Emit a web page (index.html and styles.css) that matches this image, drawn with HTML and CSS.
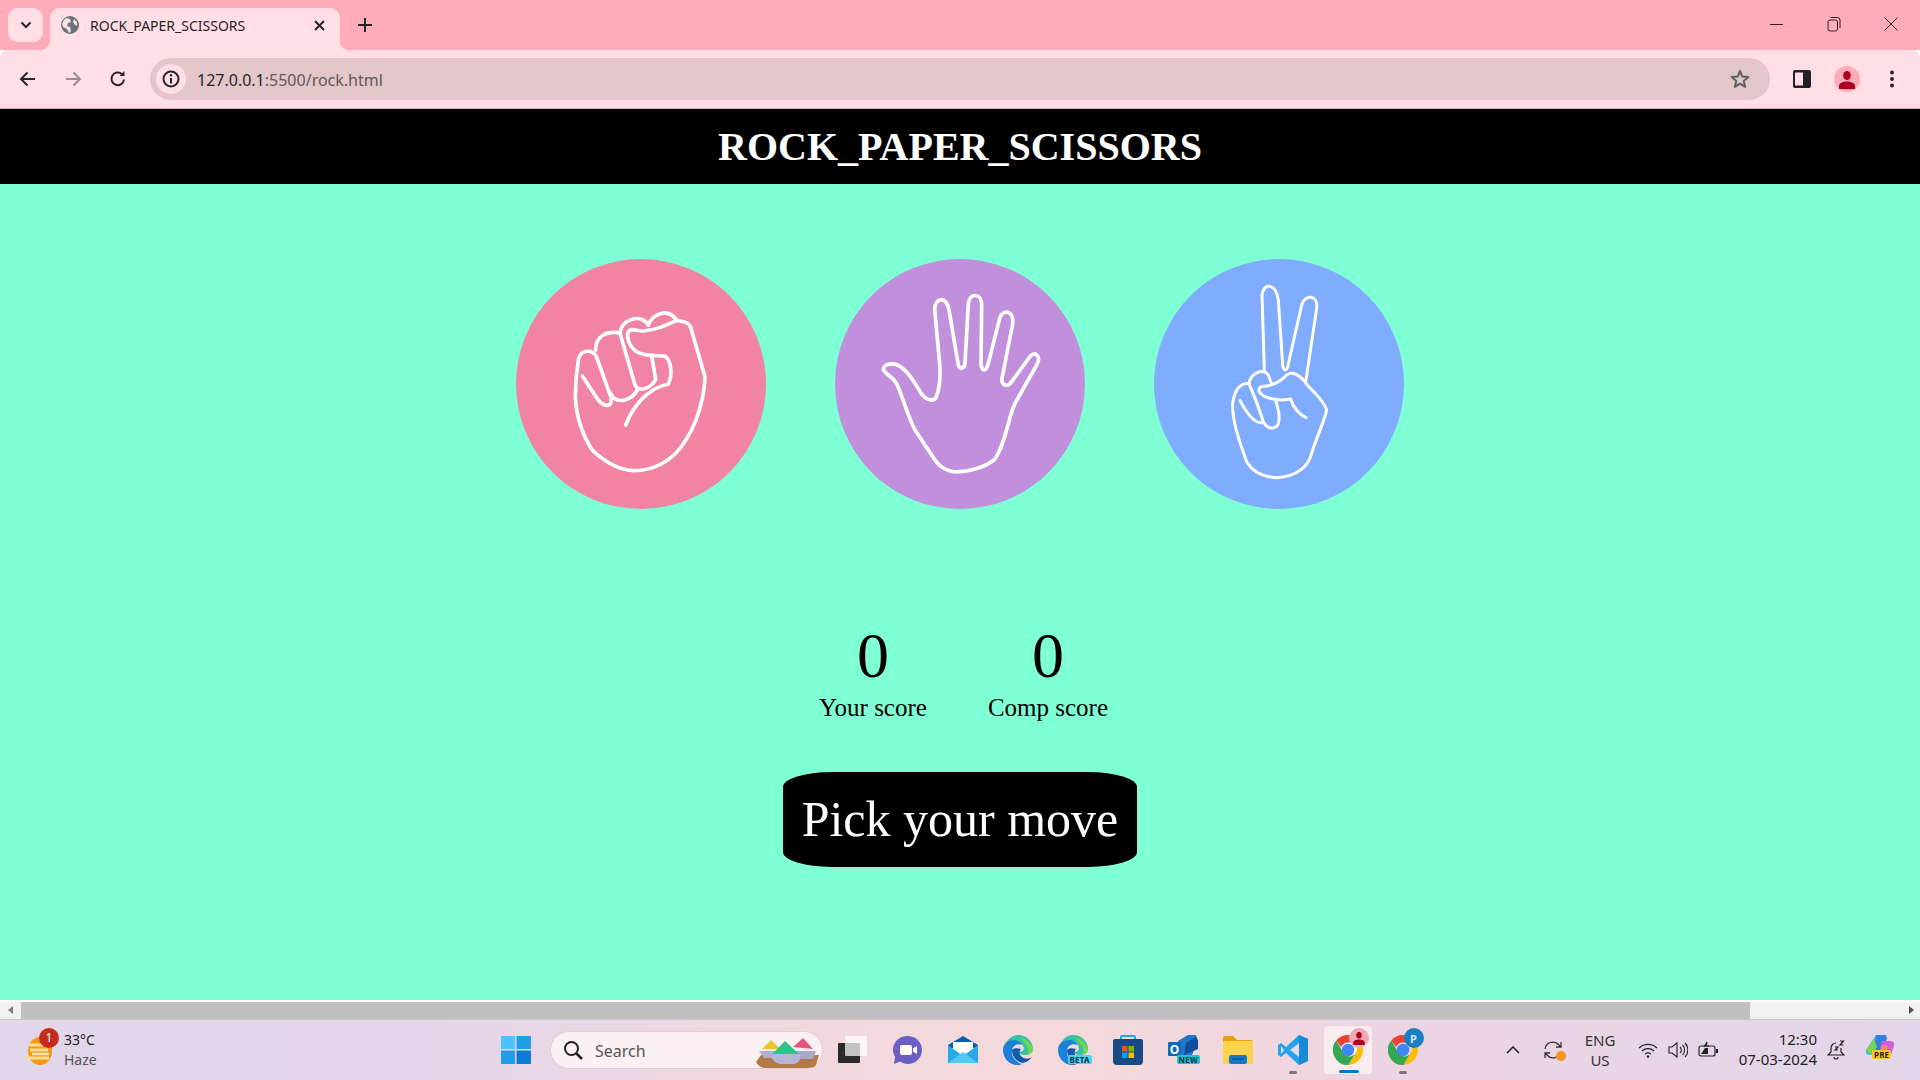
FILE: index.html
```html
<!DOCTYPE html>
<html lang="en">
<head>
    <meta charset="UTF-8">
    <title>ROCK_PAPER_SCISSORS</title>
    <link rel="stylesheet" href="styles.css">
</head>
<body>

<svg class="defs" width="0" height="0">
    <defs>
        <symbol id="chrome" viewBox="0 0 30 30">
            <path d="M15 0a15 15 0 0 1 13 7.5H15a7.500 7.500 0 0 0-6.900 4.500L3.300 5.500A15 15 0 0 1 15 0z" fill="#ea4335"/>
            <path d="M28 7.500A15 15 0 0 1 15.500 30l6-10.500A7.500 7.500 0 0 0 21 7.500z" fill="#fbbc04"/>
            <path d="M15.500 30A15 15 0 0 1 3.300 5.500l6 10.500a7.500 7.500 0 0 0 12.200 3.500z" fill="#34a853"/>
            <circle cx="15" cy="15" r="6.200" fill="#4285f4"/>
        </symbol>
        <symbol id="edge" viewBox="0 0 30 30">
            <path d="M2 11C4 4 9 0 15 0c8 0 15 6 15 14 0 4-4 6-8 6-4 0-6-2-6-3 3 0 5-2 5-4-1-4-5-6-9-6-5 0-8 2-10 4z" fill="#35c1a8"/>
            <path d="M0 15C0 8 6 5 11 5c4 0 7 2 8 5-4-2-9 0-10 5-1 6 3 12 10 14-2 1-3 1-5 1C6 30 0 23 0 15z" fill="#1a80d8"/>
            <path d="M9 15c0 6 4 12 11 13 4-1 7-3 9-6-3 2-7 2-10 0-3-2-3-6-1-8-4-1-7-1-9 1z" fill="#0f5ba8"/>
            <path d="M17 3c6 0 11 5 13 11 0 3-3 5-7 6 3-3 3-7 0-10-2-3-4-5-6-7z" fill="#6fd84e"/>
        </symbol>
    </defs>
</svg>

<!-- browser chrome -->
<div class="tab-strip">
    <div class="tab-search">
        <svg width="12" height="8" viewBox="0 0 12 8"><path d="M1.500 1.500L6 6l4.500-4.500" class="line-dark"/></svg>
    </div>
    <div class="tab">
        <svg class="favicon" width="18" height="18" viewBox="0 0 18 18">
            <circle cx="9" cy="9" r="9" fill="#6b7378"/>
            <path d="M5 2l4 1 1 3-3 1-1 3 3 1 1 4-2 2-2-4-4-2-1-3 2-4zM13 3l3 3v4l-2-1-2-3z" fill="#ffdfe5"/>
        </svg>
        <span class="tab-title">ROCK_PAPER_SCISSORS</span>
        <svg class="tab-close" width="11" height="11" viewBox="0 0 11 11"><path d="M1 1l9 9M10 1l-9 9" class="line-dark"/></svg>
    </div>
    <svg class="new-tab" width="14" height="14" viewBox="0 0 14 14"><path d="M7 0v14M0 7h14" class="line-dark"/></svg>
    <div class="window-btns">
        <svg width="14" height="14" viewBox="0 0 14 14"><path d="M0 7.500h13" class="line-thin"/></svg>
        <svg width="14" height="16" viewBox="0 0 14 16"><rect x="1" y="4" width="9.500" height="11" rx="2" class="line-thin"/><path d="M3.500 1.500h7a2.500 2.500 0 0 1 2.500 2.500v8" class="line-thin"/></svg>
        <svg width="14" height="14" viewBox="0 0 14 14"><path d="M.5.500l13 13M13.500.500l-13 13" class="line-thin"/></svg>
    </div>
</div>

<div class="toolbar">
    <div class="nav-btns">
        <svg width="18" height="16" viewBox="0 0 18 16"><path d="M16 8H2M8.500 1.500L2 8l6.500 6.500" class="line-dark"/></svg>
        <svg width="18" height="16" viewBox="0 0 18 16"><path d="M2 8h14M9.500 1.500L16 8l-6.500 6.500" class="line-grey"/></svg>
        <svg width="18" height="18" viewBox="0 0 18 18"><path d="M15 9.500A6.300 6.300 0 1 1 13 4.200" class="line-dark"/><path d="M15.500 1v5h-5z" fill="#26262a"/></svg>
    </div>
    <div class="omnibox">
        <div class="site-info">
            <svg width="18" height="18" viewBox="0 0 18 18"><circle cx="9" cy="9" r="7.500" fill="none" stroke="#26262a" stroke-width="2"/><path d="M9 8v5.500" stroke="#26262a" stroke-width="2"/><circle cx="9" cy="5.300" r="1.200" fill="#26262a"/></svg>
        </div>
        <span class="url"><span class="url-host">127.0.0.1</span>:5500/rock.html</span>
        <svg class="star" width="20" height="20" viewBox="0 0 20 20"><path d="M10 2l2.300 5.600 6 .4-4.600 3.900 1.500 5.900L10 14.600l-5.200 3.200 1.500-5.900L1.700 8l6-.4z" fill="none" stroke="#5f5f63" stroke-width="2" stroke-linejoin="round"/></svg>
    </div>
    <div class="toolbar-right">
        <svg width="18" height="18" viewBox="0 0 18 18"><rect width="18" height="18" rx="2" fill="#202124"/><rect x="2" y="2.500" width="8" height="13" fill="#ffdfe5"/></svg>
        <div class="avatar">
            <svg width="16" height="18" viewBox="0 0 16 18"><ellipse cx="8" cy="4.500" rx="3.800" ry="4.500" fill="#b00020"/><path d="M0 18v-3c0-3 4-4.500 8-4.500s8 1.500 8 4.500v3z" fill="#b00020"/></svg>
        </div>
        <svg class="menu-dots" width="4" height="18" viewBox="0 0 4 18"><circle cx="2" cy="2.500" r="2" fill="#26262a"/><circle cx="2" cy="9" r="2" fill="#26262a"/><circle cx="2" cy="15.500" r="2" fill="#26262a"/></svg>
    </div>
</div>

<!-- the page -->
<div class="page">
    <h1 class="page-title">ROCK_PAPER_SCISSORS</h1>

    <div class="choices">
        <div class="choice choice-rock">
            <svg class="hand" viewBox="48 27 750 750">
                <path d="M247 378L292 446C305 465 325 474 333 458C336 450 330 432 325 420L290 322C278 296 244 298 236 325C230 360 226 405 226 440C228 490 245 550 275 598C300 625 350 660 400 662C450 662 490 645 525 612C575 560 612 470 615 380L572 232C566 216 548 214 530 211"/>
                <path d="M445 225C458 190 505 172 530 211C500 225 470 240 430 243C410 244 395 232 385 245C378 262 388 290 410 305C430 318 460 316 495 318C515 335 518 375 505 402C445 415 400 465 377 525"/>
                <path d="M287 300C285 260 320 240 360 250L405 405C415 425 450 420 467 388L455 318"/>
                <path d="M325 420L340 443C360 460 395 450 412 420"/>
                <path d="M360 250C365 205 425 190 445 225"/>
            </svg>
        </div>
        <div class="choice choice-paper">
            <svg class="hand" viewBox="45 27 750 750">
                <path d="M190 358C192 342 215 338 232 345C262 358 285 400 302 428C315 448 340 458 348 442C362 410 362 370 358 330L344 178C344 145 378 135 387 180L415 345C420 358 432 358 435 340L445 160C450 128 485 128 485 165L483 345C488 368 500 362 505 340L540 202C550 178 582 180 578 222L545 390C548 410 565 410 575 395L630 320C645 300 665 320 650 345L585 460C565 500 555 590 522 630C495 652 440 668 400 665C365 658 350 640 335 615L285 540C260 490 245 430 228 398C215 378 195 372 190 358Z"/>
            </svg>
        </div>
        <div class="choice choice-scissors">
            <svg class="hand hand-thin" viewBox="42 27 750 750">
                <path d="M373 360L366 135C370 98 408 98 415 150L428 345C430 365 442 365 445 342L485 165C495 130 535 135 530 175L498 390"/>
                <path d="M450 447C415 455 370 445 358 425C352 410 370 408 385 407C420 400 430 385 440 375C455 365 470 368 495 395C510 420 550 445 560 480C555 510 530 560 515 610C505 650 470 680 410 683C360 680 335 660 320 635C300 580 275 510 278 460C285 410 310 395 327 402"/>
                <path d="M327 402C330 370 370 352 385 375L395 402"/>
                <path d="M327 402C345 440 358 480 370 515C385 542 415 540 417 510C420 490 412 470 408 455"/>
                <path d="M300 452C320 490 345 522 368 518"/>
                <path d="M452 447C460 475 480 495 498 503"/>
            </svg>
        </div>
    </div>

    <div class="scores">
        <div class="score">
            <p class="score-value">0</p>
            <p class="score-label">Your score</p>
        </div>
        <div class="score">
            <p class="score-value">0</p>
            <p class="score-label">Comp score</p>
        </div>
    </div>

    <div class="msg-wrap">
        <div class="msg">Pick your move</div>
    </div>
</div>

<!-- horizontal scrollbar -->
<div class="hscroll">
    <div class="arrow arrow-left"></div>
    <div class="thumb"></div>
    <div class="arrow arrow-right"></div>
</div>

<!-- windows taskbar -->
<div class="taskbar">
    <div class="weather">
        <div class="weather-icon">
            <svg width="30" height="30" viewBox="0 0 30 30">
                <ellipse cx="15" cy="16" rx="12" ry="14" fill="#f59a0e"/>
                <path d="M4 10h14M5 15h18M0 23h24" stroke="#f8dc9a" stroke-width="3"/>
                <path d="M7 19h17" stroke="#fbe7b5" stroke-width="2.500"/>
            </svg>
            <span class="weather-badge">1</span>
        </div>
        <div class="weather-text">
            <span class="weather-temp">33°C</span>
            <span class="weather-desc">Haze</span>
        </div>
    </div>

    <div class="task-center">
        <div class="task-slot task-start">
            <svg width="30" height="30" viewBox="0 0 30 30">
                <path d="M1 1h13v13H0V2a1 1 0 0 1 1-1z" fill="#4cc2ff"/>
                <path d="M15.500 1H29a1 1 0 0 1 1 1v12H15.500z" fill="#1f9ee8"/>
                <path d="M0 15.500h14V29H1a1 1 0 0 1-1-1z" fill="#1f9ee8"/>
                <path d="M15.500 15.500H30V28a1 1 0 0 1-1 1H15.500z" fill="#0a7cd8"/>
            </svg>
        </div>
        <div class="task-search">
            <svg width="20" height="20" viewBox="0 0 20 20"><circle cx="8.500" cy="8.500" r="6.500" fill="none" stroke="#222" stroke-width="2"/><path d="M13.500 13.500L19 19" stroke="#222" stroke-width="2.500"/></svg>
            <span class="search-text">Search</span>
            <svg class="search-art" width="63" height="30" viewBox="0 0 63 30">
                <path d="M0 24L5 17h58l-3 10q-2 3-8 3H10q-7 0-10-6z" fill="#b27a45"/>
                <path d="M6 11l9-9 9 9z" fill="#e9c52a"/>
                <path d="M37 9l10-9 10 11z" fill="#e8507f"/>
                <path d="M3 13h20l-2 7H8z" fill="#b3b0d0"/>
                <path d="M38 13h22l-3 8H42z" fill="#aaa7c8"/>
                <path d="M16 16L29 3l14 13z" fill="#2fc48e"/>
                <path d="M15 16h30q0 8-7 10H24q-8-2-9-10z" fill="#b8b6d6"/>
            </svg>
        </div>
        <div class="task-slot">
            <svg width="30" height="30" viewBox="0 0 30 30">
                <rect x="0" y="8" width="22" height="20" rx="1" fill="#2a2a2a"/>
                <rect x="7" y="1" width="22" height="20" rx="1" fill="#fff" fill-opacity=".72"/>
            </svg>
        </div>
        <div class="task-slot">
            <svg width="30" height="30" viewBox="0 0 30 30">
                <path d="M15 1a14 14 0 1 1-8 25.500L1 29l1-7A14 14 0 0 1 15 1z" fill="#6b5fc4"/>
                <rect x="7" y="10" width="12" height="10" rx="2" fill="#fff"/>
                <path d="M20 13.500l4-2.500v8l-4-2.500z" fill="#fff"/>
            </svg>
        </div>
        <div class="task-slot">
            <svg width="30" height="30" viewBox="0 0 30 30">
                <path d="M15 1L30 10v3H0v-3z" fill="#0a5cb0"/>
                <rect x="5" y="7" width="20" height="12" fill="#fff"/>
                <path d="M0 10l15 11 15-11v18H0z" fill="#28a8ea"/>
                <path d="M0 28l15-11 15 11z" fill="#50c8f5"/>
            </svg>
        </div>
        <div class="task-slot"><svg width="30" height="30"><use href="#edge"/></svg></div>
        <div class="task-slot">
            <svg width="30" height="30"><use href="#edge"/></svg>
            <span class="icon-tag tag-beta">BETA</span>
        </div>
        <div class="task-slot">
            <svg width="30" height="30" viewBox="0 0 30 30">
                <path d="M8 5V2a1 1 0 0 1 1-1h12a1 1 0 0 1 1 1v3" fill="none" stroke="#29a8e8" stroke-width="2"/>
                <path d="M0 6a2 2 0 0 1 2-2h26a2 2 0 0 1 2 2v20a4 4 0 0 1-4 4H4a4 4 0 0 1-4-4z" fill="#1a4a85"/>
                <rect x="9" y="11" width="5.500" height="5.500" fill="#f25022"/>
                <rect x="15.500" y="11" width="5.500" height="5.500" fill="#7fba00"/>
                <rect x="9" y="17.500" width="5.500" height="5.500" fill="#00a4ef"/>
                <rect x="15.500" y="17.500" width="5.500" height="5.500" fill="#ffb900"/>
            </svg>
        </div>
        <div class="task-slot">
            <svg width="30" height="30" viewBox="0 0 30 30">
                <path d="M10 6L20 0h8l2 6-6 14H10z" fill="#1f77c8"/>
                <path d="M18 8L28 2l2 4v8L16 20z" fill="#0f4f9a"/>
                <rect x="0" y="7" width="13" height="14" rx="1" fill="#0f6cbd"/>
                <text x="6.500" y="18.500" class="icon-letter">O</text>
            </svg>
            <span class="icon-tag tag-new">NEW</span>
        </div>
        <div class="task-slot">
            <svg width="30" height="28" viewBox="0 0 30 28">
                <path d="M0 2a2 2 0 0 1 2-2h8l4 4h14a2 2 0 0 1 2 2v4H0z" fill="#e3a008"/>
                <rect x="0" y="5" width="30" height="23" rx="1" fill="#ffd24d"/>
                <rect x="6" y="19" width="18" height="9" rx="2" fill="#1479c9"/>
                <path d="M9 23h12" stroke="#0c4f8a" stroke-width="1.200"/>
            </svg>
        </div>
        <div class="task-slot has-dot">
            <svg width="30" height="30" viewBox="0 0 30 30">
                <path d="M21 0l9 4v22l-9 4L8 18l-5 4-3-2V10l3-2 5 4z" fill="#23a3ec"/>
                <path d="M21 0v30l9-4V4z" fill="#1b8ad6"/>
                <path d="M21 8L12 15l9 7z" fill="#ffdfe0" fill-opacity=".9"/>
                <path d="M3 11l3 4-3 4z" fill="#ffdfe0" fill-opacity=".9"/>
            </svg>
        </div>
        <div class="task-slot task-active">
            <svg width="30" height="30"><use href="#chrome"/></svg>
            <span class="profile-badge badge-pink">
                <svg width="12" height="13" viewBox="0 0 16 18"><ellipse cx="8" cy="4.500" rx="3.800" ry="4.500" fill="#b00020"/><path d="M0 18v-3c0-3 4-4.500 8-4.500s8 1.500 8 4.500v3z" fill="#b00020"/></svg>
            </span>
        </div>
        <div class="task-slot has-dot">
            <svg width="30" height="30"><use href="#chrome"/></svg>
            <span class="profile-badge badge-blue">P</span>
        </div>
    </div>

    <div class="tray">
        <svg class="tray-chevron" width="14" height="8" viewBox="0 0 14 8"><path d="M1 7l6-6 6 6" fill="none" stroke="#222" stroke-width="1.500"/></svg>
        <div class="tray-sync">
            <svg width="20" height="20" viewBox="0 0 20 20"><path d="M2 9a8 8 0 0 1 14-4l2 2M18 11a8 8 0 0 1-14 4l-2-2M18 2v5h-5M2 18v-5h5" fill="none" stroke="#333" stroke-width="1.300"/></svg>
            <span class="sync-dot"></span>
        </div>
        <div class="tray-lang"><span>ENG</span><span>US</span></div>
        <div class="tray-status">
            <svg width="20" height="16" viewBox="0 0 20 16"><path d="M1 6a13 13 0 0 1 18 0M4 9a9 9 0 0 1 12 0M7 12a5 5 0 0 1 6 0" fill="none" stroke="#222" stroke-width="1.200"/><circle cx="10" cy="14.500" r="1.300" fill="#222"/></svg>
            <svg width="20" height="18" viewBox="0 0 20 18"><path d="M1 6h3l5-4v14l-5-4H1z" fill="none" stroke="#222" stroke-width="1.100"/><path d="M12 6a4 4 0 0 1 0 6M14.500 4a7 7 0 0 1 0 10M17 2a10 10 0 0 1 0 14" fill="none" stroke="#222" stroke-width="1.100"/></svg>
            <svg width="21" height="18" viewBox="0 0 21 18"><rect x="1" y="5" width="16" height="10" rx="2" fill="none" stroke="#222" stroke-width="1.200"/><path d="M3 13l4-6h3v6z" fill="#222"/><path d="M6 6l3-5-1 4h3" fill="none" stroke="#222" stroke-width="1.200"/><rect x="18" y="8" width="2" height="4" fill="#222"/></svg>
        </div>
        <div class="tray-clock"><span>12:30</span><span>07-03-2024</span></div>
        <svg class="tray-bell" width="18" height="20" viewBox="0 0 18 20"><path d="M9 3a5 5 0 0 0-5 5v4l-3 3h16l-3-3V8" fill="none" stroke="#222" stroke-width="1.200"/><path d="M7 17a2 2 0 0 0 4 0" fill="none" stroke="#222" stroke-width="1.200"/><path d="M8 7h3l-3 3h3M13 1h3.500L13 5h3.500" fill="none" stroke="#222" stroke-width="1.200"/></svg>
        <div class="tray-copilot">
            <svg width="28" height="24" viewBox="0 0 28 24">
                <path d="M10 0h10l-8 20H4q-5 0-4-5z" fill="#3fbfd8"/>
                <path d="M10 0h10l1 4-7 14-6-2z" fill="#2f7fe0"/>
                <path d="M0 15L8 4l3 8-5 8z" fill="#7fd04f"/>
                <path d="M16 6h8q5 0 4 5l-3 9q-1 3-5 3h-8z" fill="#d45fd8"/>
                <path d="M12 23l4-13 6 1-3 12z" fill="#f48a6a"/>
            </svg>
            <span class="icon-tag tag-pre">PRE</span>
        </div>
    </div>
</div>

</body>
</html>
```

FILE: styles.css
```css
html, body {
    margin: 0;
    height: 100%;
}
body {
    display: flex;
    flex-direction: column;
    height: 1080px;
    overflow: hidden;
    font-family: "Liberation Serif", "Times New Roman", serif;
}
.defs {
    position: absolute;
}
.line-dark {
    fill: none;
    stroke: #26262a;
    stroke-width: 2;
}
.line-grey {
    fill: none;
    stroke: #9c8a90;
    stroke-width: 2;
}
.line-thin {
    fill: none;
    stroke: #2a2226;
    stroke-width: 1;
}

/* tab strip */
.tab-strip {
    display: flex;
    align-items: flex-end;
    height: 50px;
    flex: none;
    background-color: #ffabb9;
    padding-left: 8px;
}
.tab-search {
    display: flex;
    align-items: center;
    justify-content: center;
    width: 35px;
    height: 34px;
    margin-bottom: 8px;
    background-color: #ffdfe5;
    border-radius: 10px;
}
.tab {
    display: flex;
    align-items: center;
    width: 290px;
    height: 42px;
    margin-left: 7px;
    padding: 0 0 8px 11px;
    box-sizing: border-box;
    background-color: #ffdfe5;
    border-radius: 10px 10px 0 0;
    position: relative;
}
.tab::before, .tab::after {
    content: "";
    position: absolute;
    bottom: 0;
    width: 10px;
    height: 10px;
}
.tab::before {
    left: -10px;
    background: radial-gradient(circle at 0 0, #ffabb9 10px, #ffdfe5 10.500px);
}
.tab::after {
    right: -10px;
    background: radial-gradient(circle at 100% 0, #ffabb9 10px, #ffdfe5 10.500px);
}
.tab-title {
    margin-left: 11px;
    font: 14px "Noto Sans", sans-serif;
    color: #2b2326;
    width: 224px;
    white-space: nowrap;
}
.new-tab {
    align-self: center;
    margin-left: 18px;
}
.window-btns {
    display: flex;
    align-items: center;
    align-self: flex-start;
    height: 48px;
    margin-left: auto;
    gap: 43px;
    padding-right: 22px;
}

/* toolbar */
.toolbar {
    display: flex;
    align-items: center;
    height: 58px;
    flex: none;
    background-color: #ffdfe5;
    border-bottom: 1px solid #cdb0b6;
    border-radius: 8px 8px 0 0;
}
.nav-btns {
    display: flex;
    align-items: center;
    gap: 27px;
    width: 150px;
    padding-left: 19px;
    box-sizing: border-box;
}
.omnibox {
    display: flex;
    align-items: center;
    width: 1620px;
    height: 42px;
    background-color: #e2c6ca;
    border-radius: 21px;
    padding: 0 20px 0 6px;
    box-sizing: border-box;
}
.site-info {
    display: flex;
    align-items: center;
    justify-content: center;
    width: 30px;
    height: 30px;
    background-color: #ffdfe5;
    border-radius: 50%;
}
.url {
    margin: 1px 0 0 11px;
    font: 16px "Noto Sans", sans-serif;
    color: #62585c;
}
.url-host {
    color: #26262a;
}
.star {
    margin-left: auto;
}
.toolbar-right {
    display: flex;
    align-items: center;
    margin-left: 23px;
    gap: 23px;
}
.menu-dots {
    margin-left: 7px;
}
.avatar {
    display: flex;
    align-items: center;
    justify-content: center;
    width: 26px;
    height: 26px;
    background-color: #ffabb9;
    border-radius: 50%;
}
.toolbar-right .avatar svg {
    margin-top: 2px;
}

/* page */
.page {
    flex: 1;
    background-color: aquamarine;
    min-height: 0;
}
.page-title {
    margin: 0;
    height: 75px;
    line-height: 75px;
    text-align: center;
    background-color: black;
    color: white;
    font-size: 40px;
    font-weight: bold;
}
.choices {
    display: flex;
    justify-content: center;
    gap: 69px;
    margin-top: 75px;
}
.choice {
    width: 250px;
    height: 250px;
    border-radius: 50%;
}
.choice-rock {
    background-color: #f183a3;
}
.choice-paper {
    background-color: #c18fdc;
}
.choice-scissors {
    background-color: #80acff;
}
.hand {
    display: block;
    width: 250px;
    height: 250px;
    fill: none;
    stroke: white;
    stroke-width: 11;
    stroke-linecap: round;
    stroke-linejoin: round;
}
.hand-thin {
    stroke-width: 9;
}
.scores {
    display: flex;
    justify-content: center;
    gap: 61px;
    margin-top: 110px;
    padding-left: 7px;
}
.score {
    text-align: center;
}
.score-value {
    margin: 0;
    font-size: 64px;
    line-height: 74px;
}
.score-label {
    margin: 0;
    font-size: 25px;
    line-height: 29px;
}
.msg-wrap {
    display: flex;
    justify-content: center;
    margin-top: 50px;
}
.msg {
    background-color: black;
    color: white;
    font-size: 50px;
    line-height: 55px;
    padding: 20px 19px;
    border-radius: 48px / 15px;
}

/* scrollbar */
.hscroll {
    display: flex;
    align-items: stretch;
    height: 17px;
    flex: none;
    background-color: #f1f1f1;
    border-top: 2px solid #fff;
    border-bottom: 1px solid #c8c4c8;
}
.arrow {
    width: 21px;
    flex: none;
    position: relative;
}
.arrow::after {
    content: "";
    position: absolute;
    top: 4px;
    border-style: solid;
    border-width: 4.500px 5px;
    border-color: transparent;
}
.arrow-left::after {
    left: 3px;
    border-right-color: #7a7a7a;
}
.arrow-right {
    margin-left: auto;
}
.arrow-right::after {
    right: 1px;
    border-left-color: #505050;
}
.thumb {
    width: 1729px;
    background-color: #c0c0c0;
}

/* taskbar */
.taskbar {
    display: flex;
    align-items: center;
    height: 60px;
    flex: none;
    background: linear-gradient(90deg, #e1d6ea 0%, #e3d6ea 22%, #f2d8de 42%, #f5d9da 55%, #ecd4e2 72%, #e8d5e6 85%, #e2d6ea 100%);
    font-family: "Noto Sans", sans-serif;
    color: #222;
}
.weather {
    display: flex;
    align-items: center;
    width: 488px;
    flex: none;
    padding-left: 25px;
    box-sizing: border-box;
}
.weather-icon {
    position: relative;
    width: 30px;
    height: 30px;
}
.weather-badge {
    position: absolute;
    top: -7px;
    left: 14px;
    width: 20px;
    height: 20px;
    border-radius: 50%;
    background-color: #c42b1c;
    color: white;
    font-size: 12px;
    line-height: 20px;
    text-align: center;
}
.weather-text {
    display: flex;
    flex-direction: column;
    margin: -1px 0 0 9px;
    font-size: 14px;
    line-height: 20px;
}
.weather-desc {
    color: #555;
}
.task-center {
    display: flex;
    align-items: center;
    flex: none;
}
.task-slot {
    position: relative;
    display: flex;
    align-items: center;
    justify-content: center;
    width: 55px;
    height: 48px;
    box-sizing: border-box;
}
.task-start {
    margin-right: 7px;
}
.task-search {
    display: flex;
    align-items: center;
    width: 273px;
    height: 38px;
    margin-right: 2.500px;
    padding-left: 12px;
    box-sizing: border-box;
    background-color: #fbf1f4;
    border: 1px solid #e3cdd2;
    border-radius: 19px;
    position: relative;
}
.search-text {
    margin: 1px 0 0 12px;
    font-size: 16px;
    color: #555;
}
.search-art {
    position: absolute;
    right: 3px;
    top: 6px;
}
.icon-tag {
    position: absolute;
    font-size: 8px;
    font-weight: bold;
    line-height: 9px;
    letter-spacing: .2px;
    padding: 0 2px;
    border-radius: 2px;
}
.tag-beta {
    left: 22px;
    bottom: 10px;
    background-color: #4fd4f0;
    color: #0b2b3a;
}
.tag-new {
    left: 21px;
    bottom: 10px;
    background-color: #16c6d8;
    color: #062b33;
}
.icon-letter {
    font: bold 12px "Noto Sans", sans-serif;
    fill: #fff;
    text-anchor: middle;
}
.has-dot::after {
    content: "";
    position: absolute;
    bottom: 0;
    left: 23px;
    width: 8px;
    height: 3px;
    border-radius: 2px;
    background-color: #7d7478;
}
.task-active::before {
    content: "";
    position: absolute;
    inset: 0 3.500px;
    background-color: #f9ecef;
    border-radius: 4px;
}
.task-active svg {
    position: relative;
}
.task-active::after {
    content: "";
    position: absolute;
    bottom: 1px;
    left: 18px;
    width: 20px;
    height: 3px;
    border-radius: 2px;
    background-color: #0078d4;
}
.profile-badge {
    position: absolute;
    top: 2px;
    left: 28px;
    display: flex;
    align-items: center;
    justify-content: center;
    width: 20px;
    height: 20px;
    border-radius: 50%;
}
.badge-pink {
    background-color: #f5a9b8;
    border: 1px solid #d8b8c0;
    box-sizing: border-box;
}
.badge-blue {
    background-color: #1a7fc2;
    color: #cfe8f8;
    font-size: 11px;
    font-weight: bold;
}
.tray {
    display: flex;
    align-items: center;
    margin-left: 75.500px;
}
.tray-chevron {
    flex: none;
}
.tray-sync {
    position: relative;
    display: flex;
    margin-left: 23px;
}
.sync-dot {
    position: absolute;
    right: -3px;
    bottom: -1px;
    width: 10px;
    height: 10px;
    border-radius: 50%;
    background-color: #f7941d;
}
.tray-lang {
    display: flex;
    flex-direction: column;
    align-items: center;
    width: 40px;
    margin-left: 17px;
    font-size: 15px;
    line-height: 20px;
    color: #333;
}
.tray-status {
    display: flex;
    align-items: center;
    gap: 10px;
    margin-left: 18px;
}
.tray-clock {
    display: flex;
    flex-direction: column;
    align-items: flex-end;
    width: 90px;
    margin: -2px 0 0 8px;
    font-size: 15px;
    line-height: 20px;
}
.tray-bell {
    margin-left: 10px;
}
.tray-copilot {
    position: relative;
    display: flex;
    margin-left: 21px;
    margin-top: -6px;
}
.tag-pre {
    top: 15px;
    left: 6px;
    background-color: #ffc81e;
    color: #222;
}
```
